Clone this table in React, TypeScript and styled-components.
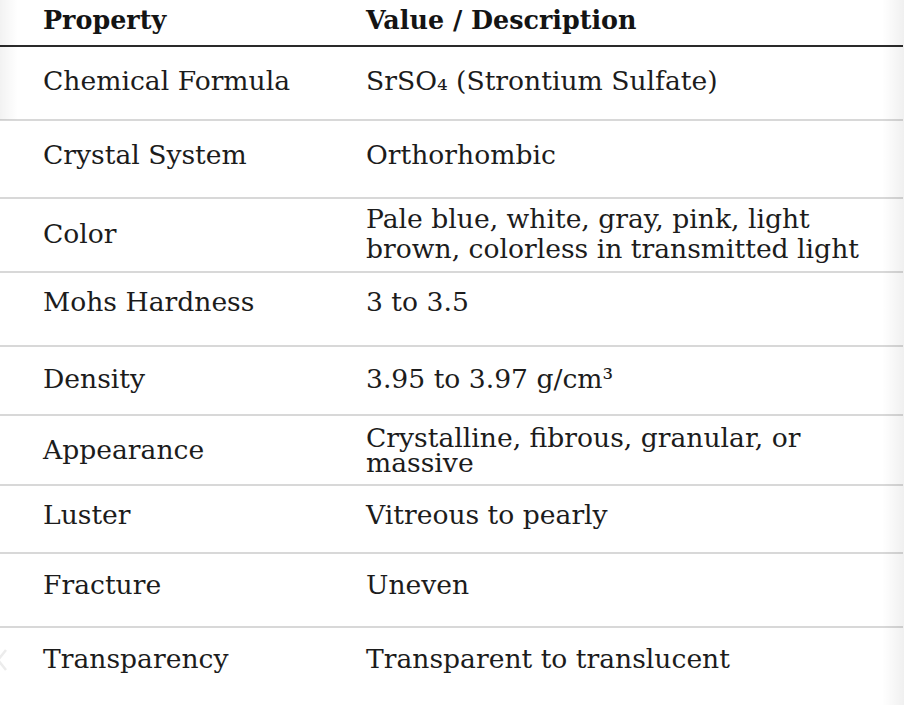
import styled, { createGlobalStyle } from 'styled-components';

// lift: how far the text sits above the row's middle
const rows = [
  { property: 'Chemical Formula', value: 'SrSO₄ (Strontium Sulfate)', height: 74, lift: 2 },
  { property: 'Crystal System', value: 'Orthorhombic', height: 78, lift: 4 },
  {
    property: 'Color',
    value: 'Pale blue, white, gray, pink, light brown, colorless in transmitted light',
    height: 74,
    lift: 1,
  },
  { property: 'Mohs Hardness', value: '3 to 3.5', height: 74, lift: 7 },
  { property: 'Density', value: '3.95 to 3.97 g/cm³', height: 69, lift: 1 },
  {
    property: 'Appearance',
    value: 'Crystalline, fibrous, granular, or massive',
    height: 70,
    lift: 0,
    tight: true,
  },
  { property: 'Luster', value: 'Vitreous to pearly', height: 68, lift: 4 },
  { property: 'Fracture', value: 'Uneven', height: 74, lift: 5 },
  { property: 'Transparency', value: 'Transparent to translucent', height: 78, lift: 8, last: true },
];

const GlobalStyle = createGlobalStyle`
  html, body {
    margin: 0;
    padding: 0;
    background: #fff;
  }
  body {
    font-family: "DejaVu Serif", "Liberation Serif", serif;
    color: #1a1a1a;
  }
`;

const App = () => {
  return (
    <>
      <GlobalStyle />
      <Page>
        <Table>
          <HeadRow>
            <HeadCell>Property</HeadCell>
            <HeadCell>Value / Description</HeadCell>
          </HeadRow>
          {rows.map(row => (
            <Row
              key={row.property}
              $height={row.height}
              $lift={row.lift}
              $last={row.last}
            >
              <Cell>{row.property}</Cell>
              <Cell $tight={row.tight}>{row.value}</Cell>
            </Row>
          ))}
        </Table>
        <LeftShade />
        <RightShade />
        <Chevron viewBox="0 0 12 24">
          <path d="M10 2 L2 12 L10 22" />
        </Chevron>
      </Page>
    </>
  );
};

export default App;

const Page = styled.div`
  position: relative;
  width: 904px;
  height: 705px;
  overflow: hidden;
  background: #fff;
`;

const Table = styled.div`
  display: flex;
  flex-direction: column;
  width: 903px;
`;

const HeadRow = styled.div`
  display: grid;
  grid-template-columns: 323px 1fr;
  height: 47px;
  box-sizing: border-box;
  border-bottom: 2px solid #2a2a2a;
  align-items: center;
  padding-bottom: 6px;
`;

const HeadCell = styled.div`
  padding-left: 43px;
  font-size: 25.4px;
  font-weight: bold;
  color: #141414;
  white-space: nowrap;
`;

const Row = styled.div<{ $height: number; $lift: number; $last?: boolean }>`
  display: grid;
  grid-template-columns: 323px 1fr;
  height: ${({ $height }) => $height}px;
  box-sizing: border-box;
  padding-bottom: ${({ $lift }) => $lift * 2}px;
  border-bottom: ${({ $last }) => ($last ? 'none' : '2px solid #d8d8d8')};
  align-items: center;
`;

const Cell = styled.div<{ $tight?: boolean }>`
  padding-left: 43px;
  padding-right: 20px;
  font-size: 26.6px;
  line-height: ${({ $tight }) => ($tight ? 0.95 : 1.13)};
  color: #1c1c1c;
`;

const RightShade = styled.div`
  position: absolute;
  top: 0;
  right: 0;
  width: 22px;
  height: 100%;
  background: linear-gradient(to right, rgba(0, 0, 0, 0), rgba(0, 0, 0, 0.06));
  pointer-events: none;
`;

const LeftShade = styled.div`
  position: absolute;
  top: 0;
  left: 0;
  width: 18px;
  height: 120px;
  background: linear-gradient(to right, rgba(0, 0, 0, 0.05), rgba(0, 0, 0, 0));
  pointer-events: none;
`;

const Chevron = styled.svg`
  position: absolute;
  left: -4px;
  top: 648px;
  width: 12px;
  height: 24px;
  fill: none;
  stroke: #ececec;
  stroke-width: 2.5;
`;
